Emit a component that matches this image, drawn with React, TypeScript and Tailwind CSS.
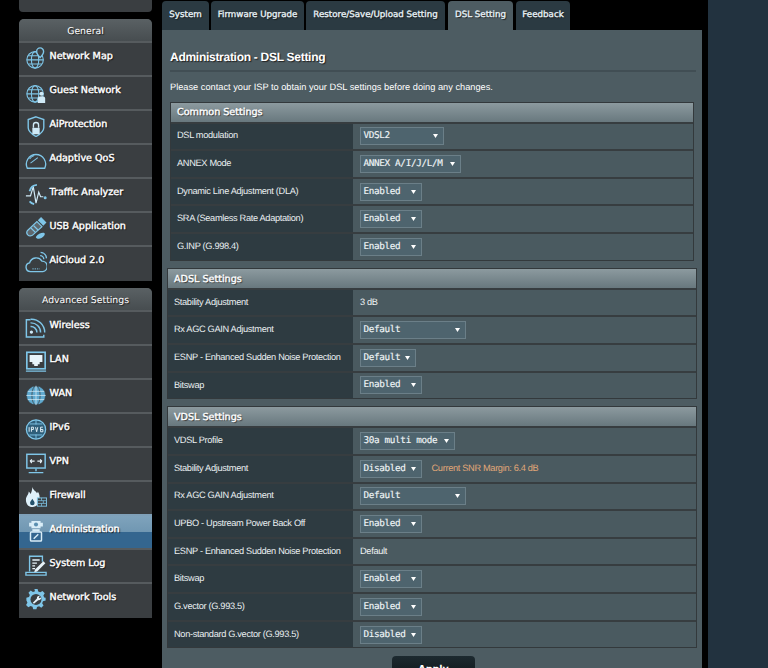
const I = "#7fc6e8";
const Globe = ({ children }: { children?: React.ReactNode }) => (
  <g fill="none" stroke={I} strokeWidth="1.2">
    <circle cx="11" cy="14" r="9" />
    <ellipse cx="11" cy="14" rx="4" ry="9" />
    <path d="M2 14h18M3.500 9.500h15M3.500 18.500h15" />
    {children}
  </g>
);
const icons: Record<string, React.ReactNode> = {
  "Network Map": (
    <Globe>
      <path d="M16.500 1a3.800 3.800 0 0 1 3.800 3.800c0 2.700-3.800 6.700-3.800 6.700s-3.800-4-3.800-6.700A3.800 3.800 0 0 1 16.500 1z" fill="#3a3f42" strokeWidth="1.500" />
    </Globe>
  ),
  "Guest Network": (
    <Globe>
      <circle cx="18" cy="14" r="2.200" fill="#cfe9f6" stroke="none" />
      <path d="M14 24v-5q0-2.500 4-2.500t4 2.500v5z" fill="#cfe9f6" stroke="none" />
    </Globe>
  ),
  AiProtection: (
    <g fill="none" stroke={I} strokeWidth="1.500">
      <path d="M12 2l8.500 3v9c0 4-4 7-8.500 9.500C7.500 21 3.500 18 3.500 14V5z" />
      <path d="M9.200 14v-3a2.800 2.800 0 0 1 5.600 0v3" stroke="#cfe9f6" />
      <rect x="8" y="14" width="8" height="7" fill="#cfe9f6" stroke="none" />
    </g>
  ),
  "Adaptive QoS": (
    <g fill="none" stroke={I} strokeWidth="1.500">
      <path d="M2.500 21a10.500 10.500 0 1 1 19 0z" />
      <path d="M6 15.500l8-6" strokeWidth="1.100" />
      <path d="M5 11a8.500 8.500 0 0 1 5-4" strokeWidth="1.100" />
    </g>
  ),
  "Traffic Analyzer": (
    <g fill="none" stroke={I} strokeWidth="1.300">
      <path d="M1 14h5l3-10 3 18 3-12 2 5h3" stroke="#cfe9f6" />
      <path d="M5 9a9 9 0 0 1 8-7M5 20a9 9 0 0 0 5 3" strokeWidth="2" />
      <circle cx="22" cy="16" r="1" fill={I} />
    </g>
  ),
  "USB Application": (
    <g fill="none" stroke={I} strokeWidth="1.300">
      <path d="M2.500 15L13 5l5.500 5.500L8 20q-3 1.500-5-.500t-.500-4.500z" fill="#cfe9f6" fillOpacity=".25" />
      <path d="M14.500 4l3-3 5 5-3 3" fill={I} />
      <path d="M6.500 12l5 5M9.500 9.500l5 5" />
      <path d="M12 21.500c2-3 7-5 9-4 1.500 1 0 4-3 5.500s-7 .5-6-1.500z" fill={I} stroke="none" />
    </g>
  ),
  "AiCloud 2.0": (
    <g fill="none" stroke={I} strokeWidth="1.500">
      <path d="M6 22.500a4.800 4.800 0 0 1-1-9.500 7.500 7.500 0 0 1 13.500-2 5.800 5.800 0 0 1 1 11.500z" />
      <path d="M16.500 5a4 4 0 0 1 4 4M17 1.500a7 7 0 0 1 6.500 6.500" />
      <path d="M8 19.500h8" strokeDasharray="1.500 1" strokeWidth="1" />
    </g>
  ),
  Wireless: (
    <g fill="none" stroke={I} strokeWidth="1.600">
      <path d="M6 4H1.500v19h19v-2.500" />
      <circle cx="7" cy="17.500" r="1.800" fill="#cfe9f6" stroke="none" />
      <path d="M6 11.500a6.500 6.500 0 0 1 7 6.500M6 7.500a10.500 10.500 0 0 1 11 10.500M6 3.500a14.500 14.500 0 0 1 15.500 14.500" />
    </g>
  ),
  LAN: (
    <g>
      <rect x="2" y="2.500" width="20" height="18" fill="none" stroke={I} strokeWidth="1.800" />
      <path d="M5 5.500h14v7.500h-3v2.500h-2v2h-4v-2H8V13H5z" fill="#e8f4fa" />
      <path d="M1 23h22" stroke={I} strokeWidth="1.400" />
    </g>
  ),
  WAN: (
    <g fill="#5fa9cf" stroke="#3a3f42" strokeWidth="0.800">
      <circle cx="12" cy="12.500" r="10.500" />
      <ellipse cx="12" cy="12.500" rx="4.500" ry="10.500" fill="none" />
      <path d="M1.500 12.500h21M3 8h18M3 17h18M12 2v21" fill="none" stroke="#d9edf7" />
    </g>
  ),
  IPv6: (
    <g>
      <circle cx="12" cy="12.500" r="10.500" fill="#2f5f7a" stroke={I} strokeWidth="1.400" />
      <path d="M5 6.500h14M5 18.500h14M12 2v5M12 18v5" stroke={I} strokeWidth="1" />
      <path d="M4.500 10v5M7 15v-5h2.200v2.500H7M11.500 10l1.200 5 1.200-5M19.500 10H17v5h2.500v-2.500H17" fill="none" stroke="#eaf6fc" strokeWidth="1" />
    </g>
  ),
  VPN: (
    <g fill="none" stroke={I} strokeWidth="1.600">
      <rect x="2" y="2.500" width="20" height="15" />
      <path d="M12 18v3M4 22.500h16" />
      <path d="M5.500 10h5M5.500 10l2-2M5.500 10l2 2M13.500 10h5M18.500 10l-2-2M18.500 10l-2 2" stroke="#e8f4fa" strokeWidth="1.200" />
    </g>
  ),
  Firewall: (
    <g>
      <path d="M8 1c1 4 5 5 5 7 1-1 1-2 1-2 2 3 2 5 2 8 0 5-3 9-8 9-4 0-7-3-7-8 0-4 3-5 3-9 1 1 2 2 2 3 1-2 2-5 2-8z" fill="#dff1fa" />
      <path d="M8 14c1 2 2.500 3 2.500 4.500a2.500 2.500 0 0 1-5 0C5.500 17 7 16 8 14z" fill="#24526c" />
      <rect x="13.500" y="13" width="10" height="9" fill="#3a3f42" stroke={I} />
      <path d="M14 16h9M14 19h9M18 13v3M20 16v3M18 19v3" stroke={I} strokeWidth="0.800" />
    </g>
  ),
  Administration: (
    <g fill={I}>
      <path d="M7 1h10v2h2.500v4H17v2H7V7H4.500V3H7z" fill="#d9edf7" />
      <circle cx="12" cy="5" r="2.200" fill="#5b8fb0" />
      <path d="M8 10h8v2.500H8z" fill="#d9edf7" />
      <rect x="6" y="13" width="12" height="10" rx="1" fill="none" stroke="#d9edf7" strokeWidth="1.600" />
      <path d="M9.500 20.500l5-5" stroke="#d9edf7" strokeWidth="1.600" />
    </g>
  ),
  "System Log": (
    <g fill="none" stroke={I} strokeWidth="1.500">
      <path d="M5 19V2.500h14v6" />
      <path d="M1 20h22v3H1z" />
      <path d="M8 6.500h8M8 10h5M8 13h3M8 16h3" stroke="#e8f4fa" />
      <path d="M11 17l9-9 2.200 2.200-9 9L10 20z" fill="#e8f4fa" stroke="none" />
    </g>
  ),
  "Network Tools": (
    <g>
      <path d="M10 0h4l.8 3.200 2.500 1 2.800-1.700 2.800 2.800-1.700 2.800 1 2.500L24 11v3.500l-3.300.8-1 2.500 1.700 2.800-2.800 2.800-2.800-1.700-2.500 1-.8 2.800h-4l-.8-3.200-2.500-1-2.800 1.700-2.800-2.800 1.700-2.800-1-2.500L0 14.500V11l3.300-.8 1-2.500-1.700-2.800 2.800-2.800 2.800 1.700 2.500-1z" fill={I} transform="translate(1.500 1) scale(.875)" />
      <circle cx="12" cy="12.500" r="6" fill="#3a3f42" />
      <path d="M8.500 16l4.500-4.500a2.700 2.700 0 0 1 3.500-3l-1.500 1.500 1 1.200 1.500-1.200a2.700 2.700 0 0 1-3.200 3.300L9.800 17.300z" fill="#e8f4fa" />
    </g>
  ),
};

function MenuItem({ label, active }: { label: string; active?: boolean }) {
  return (
    <div
      className={
        "flex h-[34px] items-center border-t-2 " +
        (active
          ? "border-[#7fa0b8] bg-[linear-gradient(#7fa3bc_0,#7097b2_50%,#34668f_50%,#34668f_100%)]"
          : "border-[#565b5e] bg-[#3a3e41]")
      }
    >
      <svg width="22" height="22" viewBox="0 0 24 24" className="ml-[5.500px] mt-[-2px] w-[22px] shrink-0">
        {icons[label]}
      </svg>
      <span className="ml-[3px] mt-[-4px] font-['DejaVu_Sans'] text-[9.600px] whitespace-nowrap text-white [-webkit-text-stroke:0.4px_white] [text-shadow:1px_1px_1px_#111]">
        {label}
      </span>
    </div>
  );
}

function MenuGroup({ title, items }: { title: string; items: string[] }) {
  return (
    <div className="overflow-hidden rounded-t-[5px] bg-[#3a3e41]">
      <div className="flex h-[22px] items-center justify-center bg-[linear-gradient(#5a6164,#474d50)] pt-[3px] font-['DejaVu_Sans'] text-[9.300px] text-white [text-shadow:1px_1px_1px_#222]">
        {title}
      </div>
      {items.map((i) => (
        <MenuItem key={i} label={i} active={i === "Administration"} />
      ))}
      <div className="h-0.5 bg-[#3a3e41]" />
    </div>
  );
}

function Tab({ label, active, w }: { label: string; active?: boolean; w: string }) {
  return (
    <div
      className={
        "flex h-[29px] items-center justify-center rounded-t-[4px] pt-[1px] font-['DejaVu_Sans'] text-[8.700px] whitespace-nowrap text-[#e6f0f4] [-webkit-text-stroke:0.35px_#e6f0f4] [text-shadow:1px_1px_1px_#111] " +
        w +
        (active ? " bg-[#4d5c62]" : " bg-[#2b3a42]")
      }
    >
      {label}
    </div>
  );
}

function Select({ text, w }: { text: string; w: string }) {
  return (
    <div className={"flex h-[18px] items-center justify-between border border-[#6b7f88] bg-[#4e646e] pl-[2.500px] pr-[5px] " + w}>
      <span className="font-['DejaVu_Sans_Mono'] text-[9.300px] whitespace-pre text-[#f0f5f7] [-webkit-text-stroke:0.15px_#f0f5f7]">{text}</span>
      <svg width="5" height="4" viewBox="0 0 5 4" className="shrink-0"><path d="M0 0h5L2.500 4z" fill="#fff" /></svg>
    </div>
  );
}

type R = { l: string; s?: [string, string]; t?: string; note?: string };

function Row({ r, inset }: { r: R; inset?: boolean }) {
  return (
    <div className="flex h-[27.650px] border-t-2 border-[#373d40]">
      <div className={"flex shrink-0 items-center whitespace-nowrap bg-[#2e3b41] pl-[6px] font-['Liberation_Sans'] text-[9.240px] tracking-[-0.33px] text-[#eaeff1] " + (inset ? "w-[182px]" : "w-[185px]")}>
        {r.l}
      </div>
      <div className="flex flex-1 items-center gap-[9.500px] bg-[#4a5a60] pl-[7px] font-['Liberation_Sans'] text-[9.240px] tracking-[-0.33px] text-[#f0f3f4]">
        {r.s && <Select text={r.s[0]} w={r.s[1]} />}
        {r.t}
        {r.note && <span className="text-[#e2a878]">{r.note}</span>}
      </div>
    </div>
  );
}

function Table({ title, rows, inset }: { title: string; rows: R[]; inset?: boolean }) {
  return (
    <div className={"border border-[#33393c] " + (inset ? "mx-2" : "mx-[5px]")}>
      <div className="flex h-[19px] items-center bg-[linear-gradient(#8c9a9f,#68787e)] pt-[3px] pl-[6px] font-['DejaVu_Sans'] text-[9.600px] text-white [-webkit-text-stroke:0.35px_white] [text-shadow:1px_1px_1px_#333]">
        {title}
      </div>
      {rows.map((r, i) => (
        <Row key={i} r={r} inset={inset} />
      ))}
    </div>
  );
}

const en: [string, string] = ["Enabled", "w-[62px]"];
const dis: [string, string] = ["Disabled", "w-[62px]"];
const def: [string, string] = ["Default", "w-[106px]"];

export default function App() {
  return (
    <div className="flex h-[668px] w-[768px] overflow-hidden bg-[#22323f] [text-rendering:geometricPrecision]">
      <div className="flex h-full w-[708px] shrink-0 bg-black pl-[15px]">
        <div className="w-[147px] shrink-0 pl-1 pr-[10px]">
          <div className="mt-[-12px] h-6 rounded-b-[4px] bg-[#3a3e41]" />
          <div className="mt-[7px]">
            <MenuGroup
              title="General"
              items={["Network Map", "Guest Network", "AiProtection", "Adaptive QoS", "Traffic Analyzer", "USB Application", "AiCloud 2.0"]}
            />
          </div>
          <div className="mt-[7px]">
            <MenuGroup
              title="Advanced Settings"
              items={["Wireless", "LAN", "WAN", "IPv6", "VPN", "Firewall", "Administration", "System Log", "Network Tools"]}
            />
          </div>
        </div>
        <div className="flex w-[540px] shrink-0 flex-col pt-px">
          <div className="flex gap-[2px]">
            <Tab label="System" w="w-[47px]" />
            <Tab label="Firmware Upgrade" w="w-[93px]" />
            <Tab label="Restore/Save/Upload Setting" w="w-[139px]" />
            <Tab label="DSL Setting" w="w-[65px] ml-px" active />
            <Tab label="Feedback" w="w-[54px] ml-px" />
          </div>
          <div className="flex-1 bg-[#4d5c62]">
            <div className="px-2 pt-[18px]">
              <h1 className="font-['Liberation_Sans'] text-[12px] leading-[18px] font-bold tracking-[-0.28px] text-white [text-shadow:1px_1px_1px_#222]">Administration - DSL Setting</h1>
              <div className="mt-[4px] h-0.5 w-[526px] bg-[#414e54]" />
              <p className="mt-[9px] font-['Liberation_Sans'] text-[9.240px] leading-[12px] whitespace-nowrap text-white">
                Please contact your ISP to obtain your DSL settings before doing any changes.
              </p>
            </div>
            <div className="mt-[8.500px]">
              <Table
                inset
                title="Common Settings"
                rows={[
                  { l: "DSL modulation", s: ["VDSL2", "w-[84px]"] },
                  { l: "ANNEX Mode", s: ["ANNEX A/I/J/L/M", "w-[101px]"] },
                  { l: "Dynamic Line Adjustment (DLA)", s: en },
                  { l: "SRA (Seamless Rate Adaptation)", s: en },
                  { l: "G.INP (G.998.4)", s: en },
                ]}
              />
            </div>
            <div className="mt-[7px]">
              <Table
                title="ADSL Settings"
                rows={[
                  { l: "Stability Adjustment", t: "3 dB" },
                  { l: "Rx AGC GAIN Adjustment", s: def },
                  { l: "ESNP - Enhanced Sudden Noise Protection", s: ["Default", "w-[56px]"] },
                  { l: "Bitswap", s: en },
                ]}
              />
            </div>
            <div className="mt-[7px]">
              <Table
                title="VDSL Settings"
                rows={[
                  { l: "VDSL Profile", s: ["30a multi mode", "w-[95px]"] },
                  { l: "Stability Adjustment", s: dis, note: "Current SNR Margin: 6.4 dB" },
                  { l: "Rx AGC GAIN Adjustment", s: def },
                  { l: "UPBO - Upstream Power Back Off", s: en },
                  { l: "ESNP - Enhanced Sudden Noise Protection", t: "Default" },
                  { l: "Bitswap", s: en },
                  { l: "G.vector (G.993.5)", s: en },
                  { l: "Non-standard G.vector (G.993.5)", s: dis },
                ]}
              />
            </div>
            <div className="mt-[8px] flex justify-center">
              <div className="ml-[3px] flex h-7 w-[83px] items-start justify-center rounded-[4px] bg-[linear-gradient(#1d2a30,#0c1114)] pt-[7px] font-['DejaVu_Sans'] text-[9.500px] font-bold text-white">
                Apply
              </div>
            </div>
          </div>
        </div>
      </div>
    </div>
  );
}
